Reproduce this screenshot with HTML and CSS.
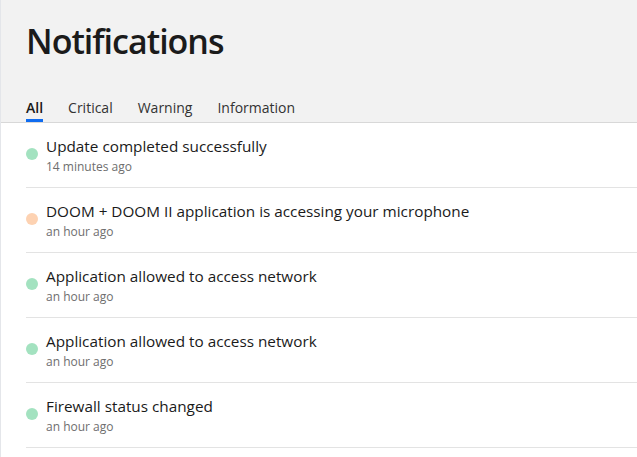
FILE: index.html
```html
<!DOCTYPE html>
<html lang="en">
<head>
    <meta charset="UTF-8">
    <meta name="viewport" content="width=device-width, initial-scale=1.0">
    <title>Notifications</title>
    <link rel="stylesheet" href="styles.css">
</head>
<body>
    <div class="panel">
        <!-- Header with title and filter tabs -->
        <header class="panel-header">
            <h1>Notifications</h1>
            <nav class="tabs">
                <span class="tab active">All</span>
                <span class="tab">Critical</span>
                <span class="tab">Warning</span>
                <span class="tab">Information</span>
            </nav>
        </header>

        <!-- Notification list -->
        <ul class="notif-list">
            <li class="notif">
                <span class="dot ok"></span>
                <div class="notif-text">
                    <div class="notif-title">Update completed successfully</div>
                    <div class="notif-time">14 minutes ago</div>
                </div>
            </li>
            <li class="notif">
                <span class="dot warn"></span>
                <div class="notif-text">
                    <div class="notif-title">DOOM + DOOM II application is accessing your microphone</div>
                    <div class="notif-time">an hour ago</div>
                </div>
            </li>
            <li class="notif">
                <span class="dot ok"></span>
                <div class="notif-text">
                    <div class="notif-title">Application allowed to access network</div>
                    <div class="notif-time">an hour ago</div>
                </div>
            </li>
            <li class="notif">
                <span class="dot ok"></span>
                <div class="notif-text">
                    <div class="notif-title">Application allowed to access network</div>
                    <div class="notif-time">an hour ago</div>
                </div>
            </li>
            <li class="notif">
                <span class="dot ok"></span>
                <div class="notif-text">
                    <div class="notif-title">Firewall status changed</div>
                    <div class="notif-time">an hour ago</div>
                </div>
            </li>
        </ul>
    </div>
</body>
</html>
```

FILE: styles.css
```css
/* Notification panel */
body {
    margin: 0;
    padding: 0;
    font-family: "Open Sans", "Noto Sans", Arial, sans-serif;
    color: #1a1a1a;
    background-color: #ffffff;
}

.panel {
    min-height: 457px;
    border-left: 1px solid #e4e6ea;
    box-sizing: border-box;
}

.panel-header {
    height: 123px;
    box-sizing: border-box;
    padding: 18px 0 0 25px;
    background-color: #f2f2f2;
    border-bottom: 1px solid #d8d8d8;
    display: flex;
    flex-direction: column;
}

h1 {
    margin: 0;
    font-size: 34px;
    font-weight: 600;
    line-height: 46px;
    letter-spacing: -1px;
    color: #1b1b1b;
}

.tabs {
    margin-top: auto;
    display: flex;
    gap: 25px;
}

.tab {
    font-size: 14px;
    line-height: 20px;
    padding: 0 0 1px;
    border-bottom: 3px solid transparent;
    color: #333333;
}

.tab.active {
    font-weight: 600;
    color: #1a1a1a;
    border-bottom-color: #0f6cf0;
}

.notif-list {
    list-style: none;
    margin: 0 0 0 25px;
    padding: 0;
}

.notif {
    display: flex;
    gap: 8px;
    padding: 13px 0 11px 0;
    border-bottom: 1px solid #e3e3e3;
}

.dot {
    flex: none;
    width: 12px;
    height: 12px;
    margin-top: 12px;
    border-radius: 50%;
}

.dot.ok {
    background-color: #a3e2c0;
}

.dot.warn {
    background-color: #fdd2b2;
}

.notif-title {
    font-size: 15.3px;
    line-height: 20px;
    color: #1a1a1a;
}

.notif-time {
    margin-top: 2px;
    font-size: 12px;
    line-height: 18px;
    color: #6e6e6e;
}
```
